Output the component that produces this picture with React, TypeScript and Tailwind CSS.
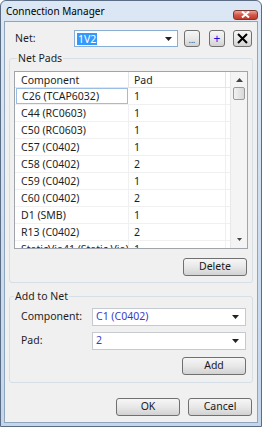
import React from "react";

const rows = [
  ["C26 (TCAP6032)", "1"],
  ["C44 (RC0603)", "1"],
  ["C50 (RC0603)", "1"],
  ["C57 (C0402)", "1"],
  ["C58 (C0402)", "2"],
  ["C59 (C0402)", "1"],
  ["C60 (C0402)", "2"],
  ["D1 (SMB)", "1"],
  ["R13 (C0402)", "2"],
  ["StaticVia41 (Static Via)", "1"],
];

const btn =
  "flex items-center justify-center rounded-[3px] border border-[#707070] bg-gradient-to-b from-[#f6f6f6] via-[#e8e8e8] to-[#d2d2d2] text-[#1a1a1a]";

const Arrow = () => (
  <svg width="7" height="4" viewBox="0 0 7 4" className="shrink-0">
    <path d="M0 0h7L3.5 4z" fill="#222" />
  </svg>
);

const Select = ({ value }: { value: string }) => (
  <div className="flex h-[18px] w-[154px] items-center justify-between border border-[#c5c9d0] bg-white pl-[3px] pr-[6px] text-[#3a3ac8]">
    <span>{value}</span>
    <Arrow />
  </div>
);

export default function App() {
  return (
    <div
      className="flex h-[427px] w-[262px] flex-col rounded-t-[6px] border border-[#5b6d85] bg-gradient-to-b from-[#dbe7f4] to-[#c3d6ec] text-[10.5px] text-[#1e1e1e]"
      style={{ fontFamily: '"Noto Sans", "Segoe UI", sans-serif' }}
    >
      <div className="flex h-[20px] shrink-0 items-center justify-between pl-[5px] pr-[3px]">
        <span className="text-[10px] text-black">Connection Manager</span>
        <div className="mt-[7px] flex h-[10px] w-[25px] items-center justify-center rounded-[3px] border border-[#7a3a32] bg-gradient-to-b from-[#e8a497] via-[#d2574a] to-[#c23a2a]">
          <svg width="9" height="7" viewBox="0 0 9 7">
            <path d="M1 0.5l7 6M8 0.5l-7 6" stroke="white" strokeWidth="2" />
          </svg>
        </div>
      </div>

      <div className="mx-[3px] mb-[3px] flex flex-1 flex-col border border-[#8fa4bd] bg-[#f0f0f0] px-[4px]">
        {/* Net row */}
        <div className="mt-[8px] flex h-[17px] items-center">
          <span className="ml-[6px] w-[59px]">Net:</span>
          <div className="flex h-[17px] w-[104px] items-center justify-between border border-[#88aed6] bg-white pl-[2px] pr-[5px]">
            <span className="bg-[#3399ff] px-[1px] leading-[12px] text-white">1V2</span>
            <Arrow />
          </div>
          <div className={`${btn} ml-[6px] h-[17px] w-[16px] items-end pb-[2px] text-[8px] leading-none`}>...</div>
          <div className={`${btn} ml-[9px] h-[17px] w-[16px] text-[12px] leading-none text-[#1010e0]`}>+</div>
          <div className={`${btn} ml-[8px] h-[17px] w-[19px] border-[#333]`}>
            <svg width="11" height="11" viewBox="0 0 11 11">
              <path d="M1 1l9 9M10 1l-9 9" stroke="#000" strokeWidth="2" />
            </svg>
          </div>
        </div>

        {/* Net Pads */}
        <fieldset className="mt-[3px] h-[233px] rounded-[3px] border border-[#d5dfe5] px-[4px]">
          <legend className="ml-[3px] px-[1px] leading-[16px]">Net Pads</legend>
          <div className="mt-[5px] flex h-[178px] border border-[#a0a4ab] bg-white">
            <div className="flex flex-1 flex-col overflow-hidden">
              <div className="flex h-[16px] shrink-0 border-b border-[#e5e5e5]">
                <div className="w-[114px] border-r border-[#e5e5e5] pl-[6px] leading-[16px]">Component</div>
                <div className="w-[97px] border-r border-[#e5e5e5] pl-[5px] leading-[16px]">Pad</div>
              </div>
              {rows.map(([c, p], i) => (
                <div key={c} className="flex h-[17px] shrink-0 border-b border-[#f0f0f0]">
                  {i === 0 ? (
                    <div className="mx-[1px] w-[112px] overflow-hidden whitespace-nowrap border border-[#99bde4] pl-[5px] leading-[14px]">
                      {c}
                    </div>
                  ) : (
                    <div className="w-[114px] overflow-hidden whitespace-nowrap border-r border-[#f0f0f0] pl-[6px] leading-[16px]">
                      {c}
                    </div>
                  )}
                  <div className="w-[97px] border-r border-[#f0f0f0] pl-[5px] leading-[16px]">{p}</div>
                </div>
              ))}
            </div>
            <div className="flex w-[17px] flex-col items-center border-l border-[#e8e8e8] bg-[#f4f4f4]">
              <svg width="7" height="4" viewBox="0 0 7 4" className="mt-[6px]">
                <path d="M0 4h7L3.5 0z" fill="#444" />
              </svg>
              <div className="mt-[5px] h-[13px] w-[12px] rounded-[2px] border border-[#9a9a9a] bg-gradient-to-r from-[#f2f2f2] to-[#d8d8d8]" />
              <div className="flex-1" />
              <svg width="5" height="3" viewBox="0 0 7 4" className="mb-[7px]">
                <path d="M0 0h7L3.5 4z" fill="#444" />
              </svg>
            </div>
          </div>
          <div className="mt-[9px] flex justify-end pr-[1px]">
            <div className={`${btn} h-[18px] w-[64px]`}>Delete</div>
          </div>
        </fieldset>

        {/* Add to Net */}
        <fieldset className="mt-[5px] h-[95px] rounded-[3px] border border-[#d5dfe5] pl-[11px] pr-[5px]">
          <legend className="ml-[-7px] px-[1px] leading-[16px]">Add to Net</legend>
          <div className="mt-[4px] flex items-center">
            <span className="w-[71px]">Component:</span>
            <Select value="C1 (C0402)" />
          </div>
          <div className="mt-[6px] flex items-center">
            <span className="w-[71px]">Pad:</span>
            <Select value="2" />
          </div>
          <div className="mt-[7px] flex justify-end pr-[1px]">
            <div className={`${btn} h-[18px] w-[64px]`}>Add</div>
          </div>
        </fieldset>

        <div className="mt-[15px] flex justify-end gap-[8px] pr-[1px]">
          <div className={`${btn} h-[18px] w-[64px] border-[#3c7fb1]`}>OK</div>
          <div className={`${btn} h-[18px] w-[64px]`}>Cancel</div>
        </div>
      </div>
    </div>
  );
}
